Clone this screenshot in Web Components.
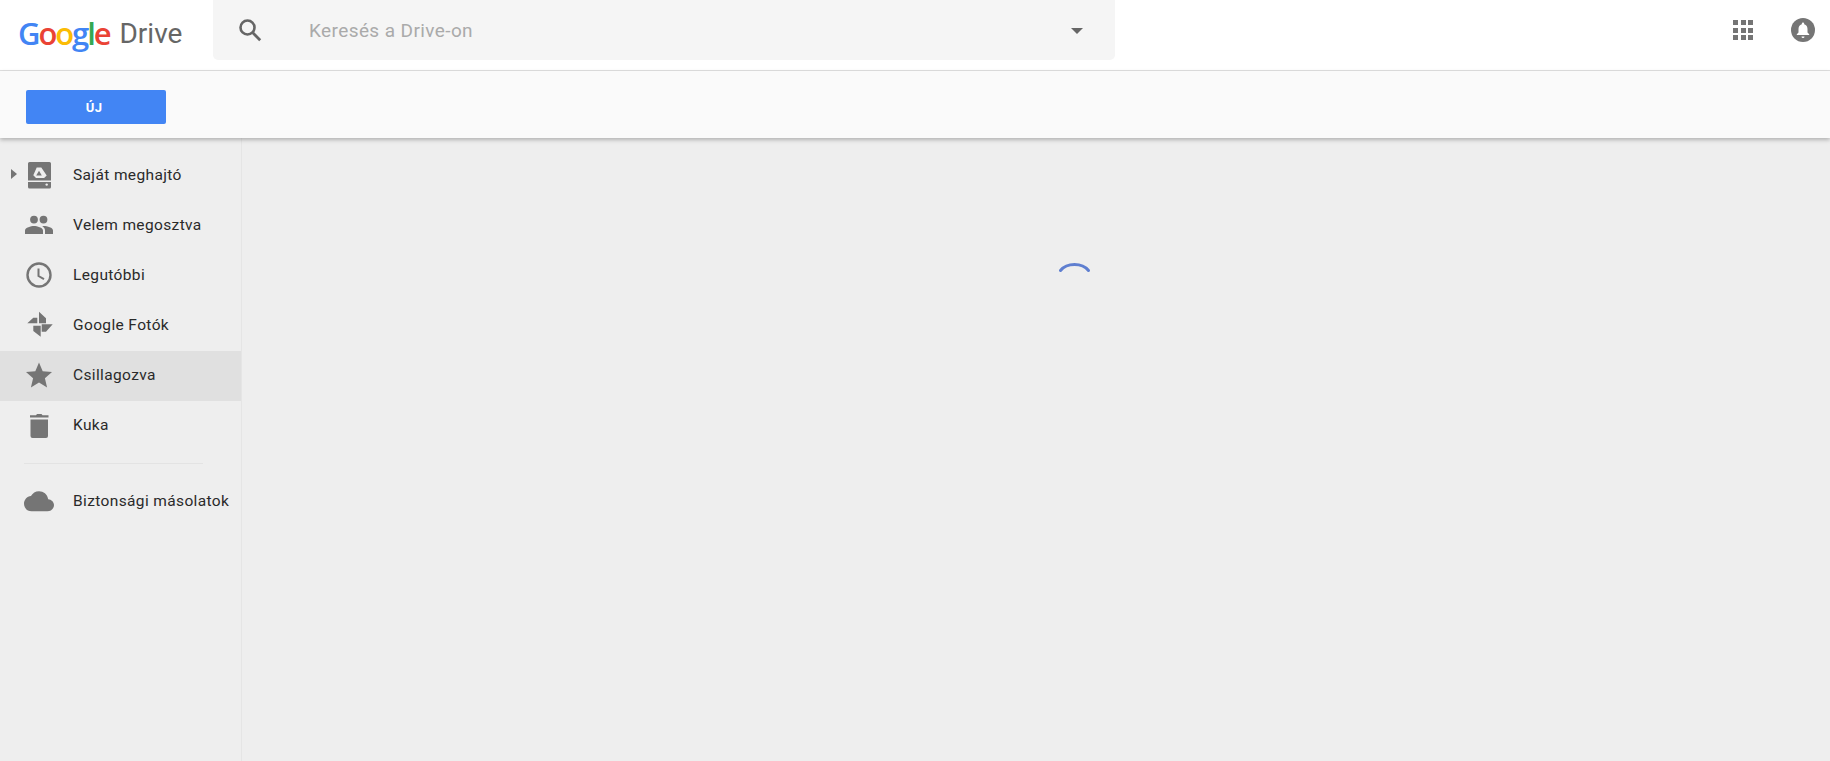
<!DOCTYPE html>
<html lang="hu">
<head>
<meta charset="utf-8">
<title>Google Drive</title>
<style>
  html, body { margin: 0; height: 100%; }
  body { font-family: Roboto, "Liberation Sans", sans-serif; background: #eee; overflow: hidden; }
</style>
</head>
<body>
<drive-app>
  <drive-header slot="header"></drive-header>
  <drive-toolbar slot="toolbar"></drive-toolbar>
  <drive-sidebar slot="sidebar">
    <drive-nav-item icon="drive" arrow>Saját meghajtó</drive-nav-item>
    <drive-nav-item icon="people">Velem megosztva</drive-nav-item>
    <drive-nav-item icon="clock">Legutóbbi</drive-nav-item>
    <drive-nav-item icon="photos">Google Fotók</drive-nav-item>
    <drive-nav-item icon="star" selected>Csillagozva</drive-nav-item>
    <drive-nav-item icon="trash">Kuka</drive-nav-item>
    <drive-nav-divider></drive-nav-divider>
    <drive-nav-item icon="cloud">Biztonsági másolatok</drive-nav-item>
  </drive-sidebar>
  <drive-spinner slot="main"></drive-spinner>
</drive-app>

<script>
const ICONS = {
  drive: `<svg width="28" height="28" viewBox="0 0 28 28"><path fill="#757575" d="M4.500 1h20a1.500 1.500 0 0 1 1.500 1.500V19.500H3V2.500A1.500 1.500 0 0 1 4.500 1z"/><path fill="#757575" d="M3 21h23v5a1.500 1.500 0 0 1-1.500 1.500h-20A1.500 1.500 0 0 1 3 26z"/><circle cx="21.700" cy="23.600" r="1.200" fill="#eee"/><path fill="#eee" fill-rule="evenodd" d="M11.700 6.500h4.600l5.400 8-2.600 2.500H11l-2.700-2.700zM14 9.800l-2.800 4.700h5.600z"/></svg>`,
  people: `<svg width="28" height="28" viewBox="0 0 28 28"><path fill="#757575" d="M18.500 12.500a3.900 3.900 0 1 0 0-7.800 3.900 3.900 0 0 0 0 7.800zm-9.500 0a3.900 3.900 0 1 0 0-7.800 3.900 3.900 0 0 0 0 7.800zm0 2.500C6 15 0 16.500 0 19.500V23h18v-3.500C18 16.500 12 15 9 15zm9.500 0c-.4 0-.8 0-1.300.1 1.600 1.100 2.800 2.600 2.800 4.400V23h8v-3.500c0-3-5.500-4.500-9.500-4.500z"/></svg>`,
  clock: `<svg width="28" height="28" viewBox="0 0 28 28"><circle cx="14" cy="14" r="11.500" fill="none" stroke="#757575" stroke-width="2.400"/><path fill="none" stroke="#757575" stroke-width="2" d="M13.500 7.500V15l5.500 3.200"/></svg>`,
  photos: `<svg width="28" height="28" viewBox="0 0 28 28"><path fill="#757575" d="M14 .7L21 7.300V12.300H14zM16.700 13.300H27.700L21 20.700H16.700zM15.700 14.700V25.700L8.300 20V14.700zM2.300 12.300H12.300V6.700H8.300z"/></svg>`,
  star: `<svg width="28" height="28" viewBox="0 0 28 28"><path fill="#757575" d="M14 1.500l3.700 8.800 9.300.8-7.100 6.200 2.200 9.200L14 21.600l-8.100 4.900 2.200-9.200L1 11.100l9.300-.8z"/></svg>`,
  trash: `<svg width="28" height="28" viewBox="0 0 28 28"><path fill="#757575" d="M5.500 8.500h17.500V25a2 2 0 0 1-2 2H7.500a2 2 0 0 1-2-2zM5 4.300h6L12 3h4.500l1 1.300h6V6.500H5z"/></svg>`,
  cloud: `<svg width="30" height="23" viewBox="0 0 32 24" style="margin-left:-1px"><path fill="#757575" d="M25.800 9.500C24.900 4.100 20.700 1 16 1c-3.700 0-7 2.100-8.600 5.200C3.200 6.700 0 10.200 0 14.500 0 19 3.600 22.500 8 22.500h17c3.900 0 7-3 7-6.800 0-3.300-2.800-5.900-6.200-6.200z"/></svg>`,
};

function define(name, html) {
  customElements.define(name, class extends HTMLElement {
    constructor() {
      super();
      this.attachShadow({ mode: 'open' }).innerHTML = html;
    }
  });
}

define('drive-app', `
  <style>
    :host { display: grid; grid-template-rows: 71px 67px 1fr; grid-template-columns: 242px 1fr; height: 761px; }
    .header { grid-column: 1 / 3; }
    .toolbar { grid-column: 1 / 3; z-index: 2; }
    .sidebar { border-right: 1px solid #e5e5e5; }
  </style>
  <div class="header"><slot name="header"></slot></div>
  <div class="toolbar"><slot name="toolbar"></slot></div>
  <div class="sidebar"><slot name="sidebar"></slot></div>
  <div class="main"><slot name="main"></slot></div>
`);

define('drive-header', `
  <style>
    :host { display: flex; height: 70px; background: #fff; border-bottom: 1px solid #e0e0e0; }
    .logo { width: 213px; flex: none; display: flex; align-items: center; padding-left: 18px; box-sizing: border-box; }
    .google { font: 600 31px/1 "Open Sans", sans-serif; letter-spacing: -2.100px; margin-top: -4px; }
    .b { color: #4285f4; } .r { color: #ea4335; } .y { color: #fbbc05; } .g { color: #34a853; }
    .drive { font: 400 28px/1 Roboto, sans-serif; color: #666; margin-left: 10px; margin-top: -2px; }
    .search { width: 902px; height: 60px; flex: none; background: #f5f5f5; border-radius: 0 0 5px 5px; display: flex; align-items: center; box-sizing: border-box; }
    .glass { margin-left: 24px; width: 26px; height: 26px; flex: none; }
    .placeholder { margin-left: 46px; font: 400 19px Roboto, sans-serif; color: #aaa; flex: 1; letter-spacing: .4px; }
    .caret { width: 0; height: 0; border: 6.500px solid transparent; border-top: 6px solid #666; border-bottom: 0; margin-right: 32px; margin-top: 2px; }
    .right { margin-left: auto; display: flex; align-items: center; height: 60px; }
    .apps { display: grid; grid-template-columns: repeat(3, 5px); grid-auto-rows: 5px; gap: 2.500px; margin-right: 38px; }
    .apps i { background: #757575; display: block; }
    .bell { margin-right: 15px; display: block; }
  </style>
  <div class="logo">
    <span class="google"><span class="b">G</span><span class="r">o</span><span class="y">o</span><span class="b">g</span><span class="g">l</span><span class="r">e</span></span>
    <span class="drive">Drive</span>
  </div>
  <div class="search">
    <svg class="glass" viewBox="0 0 26 26"><circle cx="10.500" cy="10.500" r="7" fill="none" stroke="#666" stroke-width="2.600"/><path d="M15.800 15.800l7.400 7.400" stroke="#666" stroke-width="2.800" fill="none"/></svg>
    <span class="placeholder">Keresés a Drive-on</span>
    <span class="caret"></span>
  </div>
  <div class="right">
    <div class="apps"><i></i><i></i><i></i><i></i><i></i><i></i><i></i><i></i><i></i></div>
    <svg class="bell" width="24" height="24" viewBox="0 0 24 24"><circle cx="12" cy="12" r="12" fill="#757575"/><path fill="#fff" d="M12 4.500a1.200 1.200 0 0 1 1.200 1.200v.5c2.300.6 3.300 2.500 3.300 4.800v3.500l1.700 1.700v.8H5.800v-.8l1.700-1.700V11c0-2.300 1-4.200 3.300-4.800v-.5A1.200 1.200 0 0 1 12 4.500zM10.500 18.500h3a1.500 1.500 0 0 1-3 0z"/></svg>
  </div>
`);

define('drive-toolbar', `
  <style>
    :host { display: flex; align-items: flex-start; height: 67px; background: #fafafa; box-shadow: 0 2px 4px rgba(0,0,0,.25); padding: 19px 0 0 26px; box-sizing: border-box; position: relative; }
    button { width: 140px; height: 34px; margin: 0; padding: 0; border: 0; border-radius: 2px; background: #4285f4; color: #fff; font: 700 13px Roboto, sans-serif; letter-spacing: .3px; }
    button span { position: relative; left: -2px; }
  </style>
  <button><span>ÚJ</span></button>
`);

define('drive-sidebar', `
  <style>
    :host { display: block; padding-top: 13px; height: 100%; box-sizing: border-box; background: #eee; }
  </style>
  <slot></slot>
`);

customElements.define('drive-nav-item', class extends HTMLElement {
  constructor() {
    super();
    this.attachShadow({ mode: 'open' });
  }
  connectedCallback() {
    const arrow = this.hasAttribute('arrow') ? '<span class="arrow"></span>' : '';
    this.shadowRoot.innerHTML = `
      <style>
        :host { display: flex; align-items: center; height: 50px; padding-bottom: 2px; box-sizing: border-box; position: relative; color: #2a2a2a; font: 400 15.500px Roboto, sans-serif; letter-spacing: .37px; white-space: nowrap; }
        :host([selected]) { background: #e0e0e0; }
        .icon { width: 73px; flex: none; box-sizing: border-box; padding-left: 25px; display: flex; align-items: center; }
        .icon svg { display: block; }
        .arrow { position: absolute; left: 11px; top: 18px; width: 0; height: 0; border: 5.500px solid transparent; border-left: 6px solid #757575; border-right: 0; }
      </style>
      ${arrow}<span class="icon">${ICONS[this.getAttribute('icon')] || ''}</span><slot></slot>
    `;
  }
});

define('drive-nav-divider', `
  <style>
    :host { display: block; height: 1px; margin: 12px 38px 13px 24px; background: #e3e3e3; }
  </style>
`);

define('drive-spinner', `
  <style>
    :host { display: block; padding: 120px 0 0 816px; }
    svg { display: block; }
  </style>
  <svg width="36" height="20" viewBox="0 0 36 20"><path d="M2.500 12.500C9 4.500 24 4.500 30.500 12.500" fill="none" stroke="#5f7fd0" stroke-width="3" stroke-linecap="round"/></svg>
`);
</script>
</body>
</html>
